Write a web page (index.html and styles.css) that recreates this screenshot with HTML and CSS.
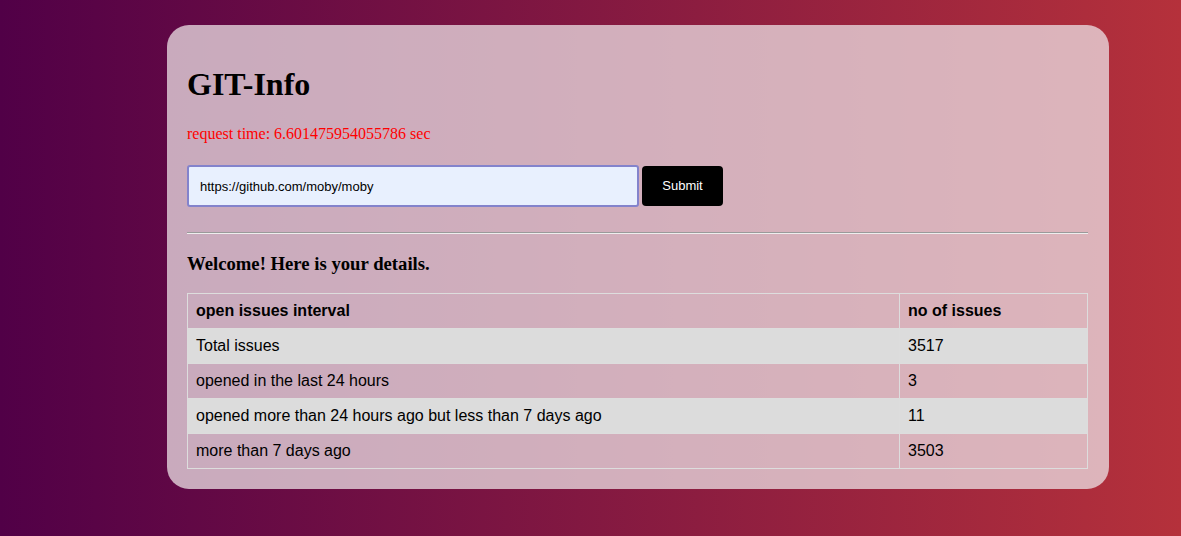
FILE: index.html
```html
<!DOCTYPE html>
<html>
<head>
<meta charset="utf-8">
<link rel="stylesheet" href="styles.css">
</head>
<body>
<div class="page">
  <main class="card">
    <h1 class="title">GIT-Info</h1>
    <p class="reqtime">request time: 6.601475954055786 sec</p>
    <form class="search">
      <input class="url" type="text" value="https://github.com/moby/moby">
      <button class="submit" type="button">Submit</button>
    </form>
    <hr class="sep">
    <h3 class="welcome">Welcome! Here is your details.</h3>
    <table class="issues">
      <tr><th class="c1">open issues interval</th><th>no of issues</th></tr>
      <tr><td>Total issues</td><td>3517</td></tr>
      <tr><td>opened in the last 24 hours</td><td>3</td></tr>
      <tr><td>opened more than 24 hours ago but less than 7 days ago</td><td>11</td></tr>
      <tr><td>more than 7 days ago</td><td>3503</td></tr>
    </table>
  </main>
</div>
</body>
</html>
```
FILE: styles.css
```css
html, body {
  margin: 0;
  height: 100%;
}
body {
  background: linear-gradient(to right, #510047, #b5313b);
  font-family: "Liberation Serif", serif;
}
.page {
  padding: 25px 0 0 167px;
}
.card {
  width: 901px;
  padding: 20px 21px 20px 20px;
  background: rgba(236, 226, 229, 0.75);
  border-radius: 22px;
}
.title {
  font-size: 32px;
  font-weight: bold;
  margin: 21px 0 0;
}
.reqtime {
  color: #ff0000;
  font-size: 16px;
  margin: 22px 0 0;
}
.search {
  display: flex;
  align-items: center;
  gap: 3px;
  margin-top: 22px;
}
.url {
  box-sizing: border-box;
  width: 452px;
  height: 42px;
  padding: 0 11px;
  background: #e8f0fe;
  border: 2px solid #8383cc;
  border-radius: 3px;
  font-family: "Liberation Sans", sans-serif;
  font-size: 13px;
  color: #000;
  outline: none;
}
.submit {
  width: 81px;
  height: 40px;
  background: #000;
  color: #fff;
  border: none;
  border-radius: 4px;
  font-family: "Liberation Sans", sans-serif;
  font-size: 13px;
  padding-bottom: 2px;
}
.sep {
  margin: 25px 0 0;
  border: 0;
  border-top: 1px solid #9a9a9a;
  border-bottom: 1px solid #eee;
  height: 0;
}
.welcome {
  font-size: 18.7px;
  margin: 19px 0 0;
}
.issues {
  width: 100%;
  margin-top: 18px;
  border-collapse: collapse;
  font-family: "Liberation Sans", sans-serif;
  font-size: 16px;
}
.issues th, .issues td {
  border: 1px solid #dddddd;
  text-align: left;
  padding: 8px;
}
.issues .c1 {
  width: 695px;
}
.issues tr:nth-child(even) {
  background: #dcdcdc;
}
```
